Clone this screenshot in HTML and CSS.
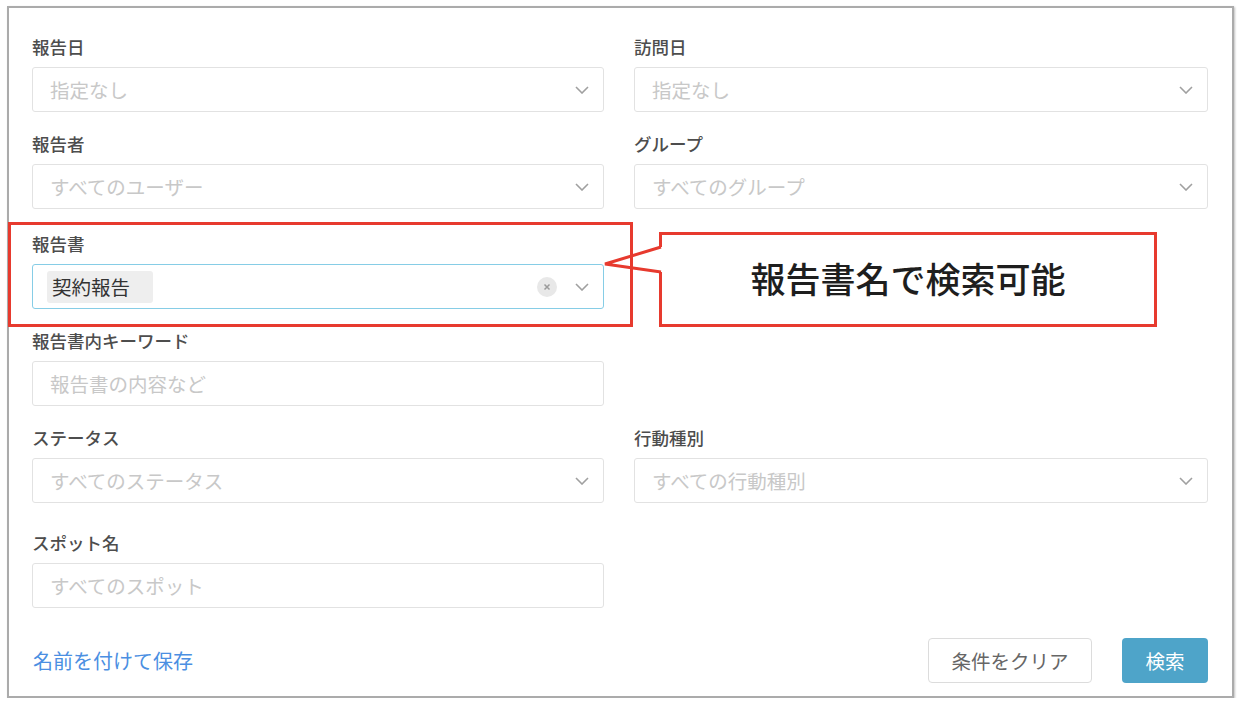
FILE: index.html
```html
<!DOCTYPE html>
<html lang="ja">
<head>
<meta charset="utf-8">
<link rel="stylesheet" href="styles.css">
</head>
<body>
<div class="panel">
  <div class="grid">
    <div class="field">
      <div class="label">報告日</div>
      <div class="input"><span class="ph">指定なし</span><svg class="chev" viewBox="0 0 14 8"><polyline points="1,1 7,7 13,1"/></svg></div>
    </div>
    <div class="field">
      <div class="label">訪問日</div>
      <div class="input"><span class="ph">指定なし</span><svg class="chev" viewBox="0 0 14 8"><polyline points="1,1 7,7 13,1"/></svg></div>
    </div>
    <div class="field">
      <div class="label">報告者</div>
      <div class="input"><span class="ph">すべてのユーザー</span><svg class="chev" viewBox="0 0 14 8"><polyline points="1,1 7,7 13,1"/></svg></div>
    </div>
    <div class="field">
      <div class="label">グループ</div>
      <div class="input"><span class="ph">すべてのグループ</span><svg class="chev" viewBox="0 0 14 8"><polyline points="1,1 7,7 13,1"/></svg></div>
    </div>
    <div class="field field--shift">
      <div class="label">報告書</div>
      <div class="input input--focus">
        <span class="tag">契約報告</span>
        <span class="clear"><svg viewBox="0 0 8 8"><path d="M1.5 1.5 L6.5 6.5 M6.5 1.5 L1.5 6.5"/></svg></span>
        <svg class="chev" viewBox="0 0 14 8"><polyline points="1,1 7,7 13,1"/></svg>
      </div>
    </div>
    <div class="field field--shift"></div>
    <div class="field">
      <div class="label">報告書内キーワード</div>
      <div class="input"><span class="ph">報告書の内容など</span></div>
    </div>
    <div class="field"></div>
    <div class="field">
      <div class="label">ステータス</div>
      <div class="input"><span class="ph">すべてのステータス</span><svg class="chev" viewBox="0 0 14 8"><polyline points="1,1 7,7 13,1"/></svg></div>
    </div>
    <div class="field">
      <div class="label">行動種別</div>
      <div class="input"><span class="ph">すべての行動種別</span><svg class="chev" viewBox="0 0 14 8"><polyline points="1,1 7,7 13,1"/></svg></div>
    </div>
    <div class="field field--last">
      <div class="label">スポット名</div>
      <div class="input"><span class="ph">すべてのスポット</span></div>
    </div>
  </div>
  <div class="footer">
    <a class="save-link">名前を付けて保存</a>
    <div class="buttons">
      <button class="btn btn--clear">条件をクリア</button>
      <button class="btn btn--search">検索</button>
    </div>
  </div>

  <div class="callout">報告書名で検索可能</div>
  <svg class="arrow" viewBox="0 0 80 40" width="80" height="40">
    <polygon class="arrow-fill" points="62,3 6,20 62,28 66,28 66,3"/>
    <polyline class="arrow-line" points="62,3 6,20 62,28"/>
  </svg>
  <div class="highlight"></div>
</div>
</body>
</html>
```

FILE: styles.css
```css
* { box-sizing: border-box; }

html, body {
  margin: 0;
  padding: 0;
  background: #ffffff;
}

body {
  font-family: "Noto Sans CJK JP", "Noto Sans", sans-serif;
  color: #444;
}

.panel {
  position: relative;
  margin: 6px 0 0 7px;
  width: 1227px;
  border: 2px solid #ababab;
  box-shadow: 1px 1px 2px rgba(0,0,0,0.25);
  padding: 29px 24px 13px 23px;
  background: #fff;
}

.grid {
  display: grid;
  grid-template-columns: 572px 574px;
  column-gap: 30px;
  row-gap: 22px;
}

.field--shift { margin-top: 3px; }
.field--last { margin-top: 8px; }

.label {
  font-size: 17.5px;
  line-height: 20px;
  height: 20px;
  margin-bottom: 10px;
  color: #4d4d4d;
  font-weight: 500;
  white-space: nowrap;
}

.input {
  height: 45px;
  border: 1px solid #e2e2e2;
  border-radius: 3px;
  display: flex;
  align-items: center;
  padding: 0 14px 0 17px;
  background: #fff;
}

.ph {
  font-size: 19.5px;
  color: #c8c8c8;
  flex: 1;
  white-space: nowrap;
}

.chev {
  width: 14px;
  height: 8px;
  margin-left: auto;
  flex: none;
}
.chev polyline {
  fill: none;
  stroke: #a0a0a0;
  stroke-width: 1.6;
}

.input--focus {
  border: 1.5px solid #86cde6;
  padding-left: 14px;
}

.tag {
  background: #eeeeee;
  border-radius: 3px;
  height: 32px;
  line-height: 32px;
  padding: 0 23px 0 5px;
  font-size: 19.5px;
  color: #333;
  white-space: nowrap;
}

.clear {
  margin-left: auto;
  width: 20px;
  height: 20px;
  border-radius: 50%;
  background: #e8e8e8;
  display: flex;
  align-items: center;
  justify-content: center;
  margin-right: 18px;
}
.clear svg { width: 8px; height: 8px; }
.clear path { stroke: #9a9a9a; stroke-width: 1.5; fill: none; }

.input--focus .chev { margin-left: 0; }

.footer {
  margin-top: 30px;
  display: flex;
  justify-content: space-between;
  align-items: center;
}

.save-link {
  font-size: 20px;
  color: #4b8fe2;
  margin-left: 1px;
  white-space: nowrap;
}

.buttons {
  display: flex;
  gap: 30px;
}

.btn {
  height: 45px;
  font-family: inherit;
  font-size: 19.5px;
  border-radius: 4px;
  cursor: pointer;
}

.btn--clear {
  width: 164px;
  background: #fff;
  border: 1px solid #dcdcdc;
  color: #666;
}

.btn--search {
  width: 86px;
  background: #4ea4c9;
  border: none;
  color: #fff;
}

/* annotations */
.highlight {
  position: absolute;
  left: -1px;
  top: 214px;
  width: 625px;
  height: 105px;
  border: 3px solid #e73a2e;
}

.callout {
  position: absolute;
  left: 650px;
  top: 224px;
  width: 498px;
  height: 95px;
  border: 3px solid #e73a2e;
  background: #fff;
  display: flex;
  align-items: center;
  justify-content: center;
  font-size: 35px;
  font-weight: 500;
  color: #1e1e1e;
  padding-bottom: 4px;
  white-space: nowrap;
}

.arrow {
  position: absolute;
  left: 590px;
  top: 236px;
  overflow: visible;
}
.arrow-fill { fill: #fff; stroke: none; }
.arrow-line { fill: none; stroke: #e73a2e; stroke-width: 3; stroke-linejoin: miter; }
```
